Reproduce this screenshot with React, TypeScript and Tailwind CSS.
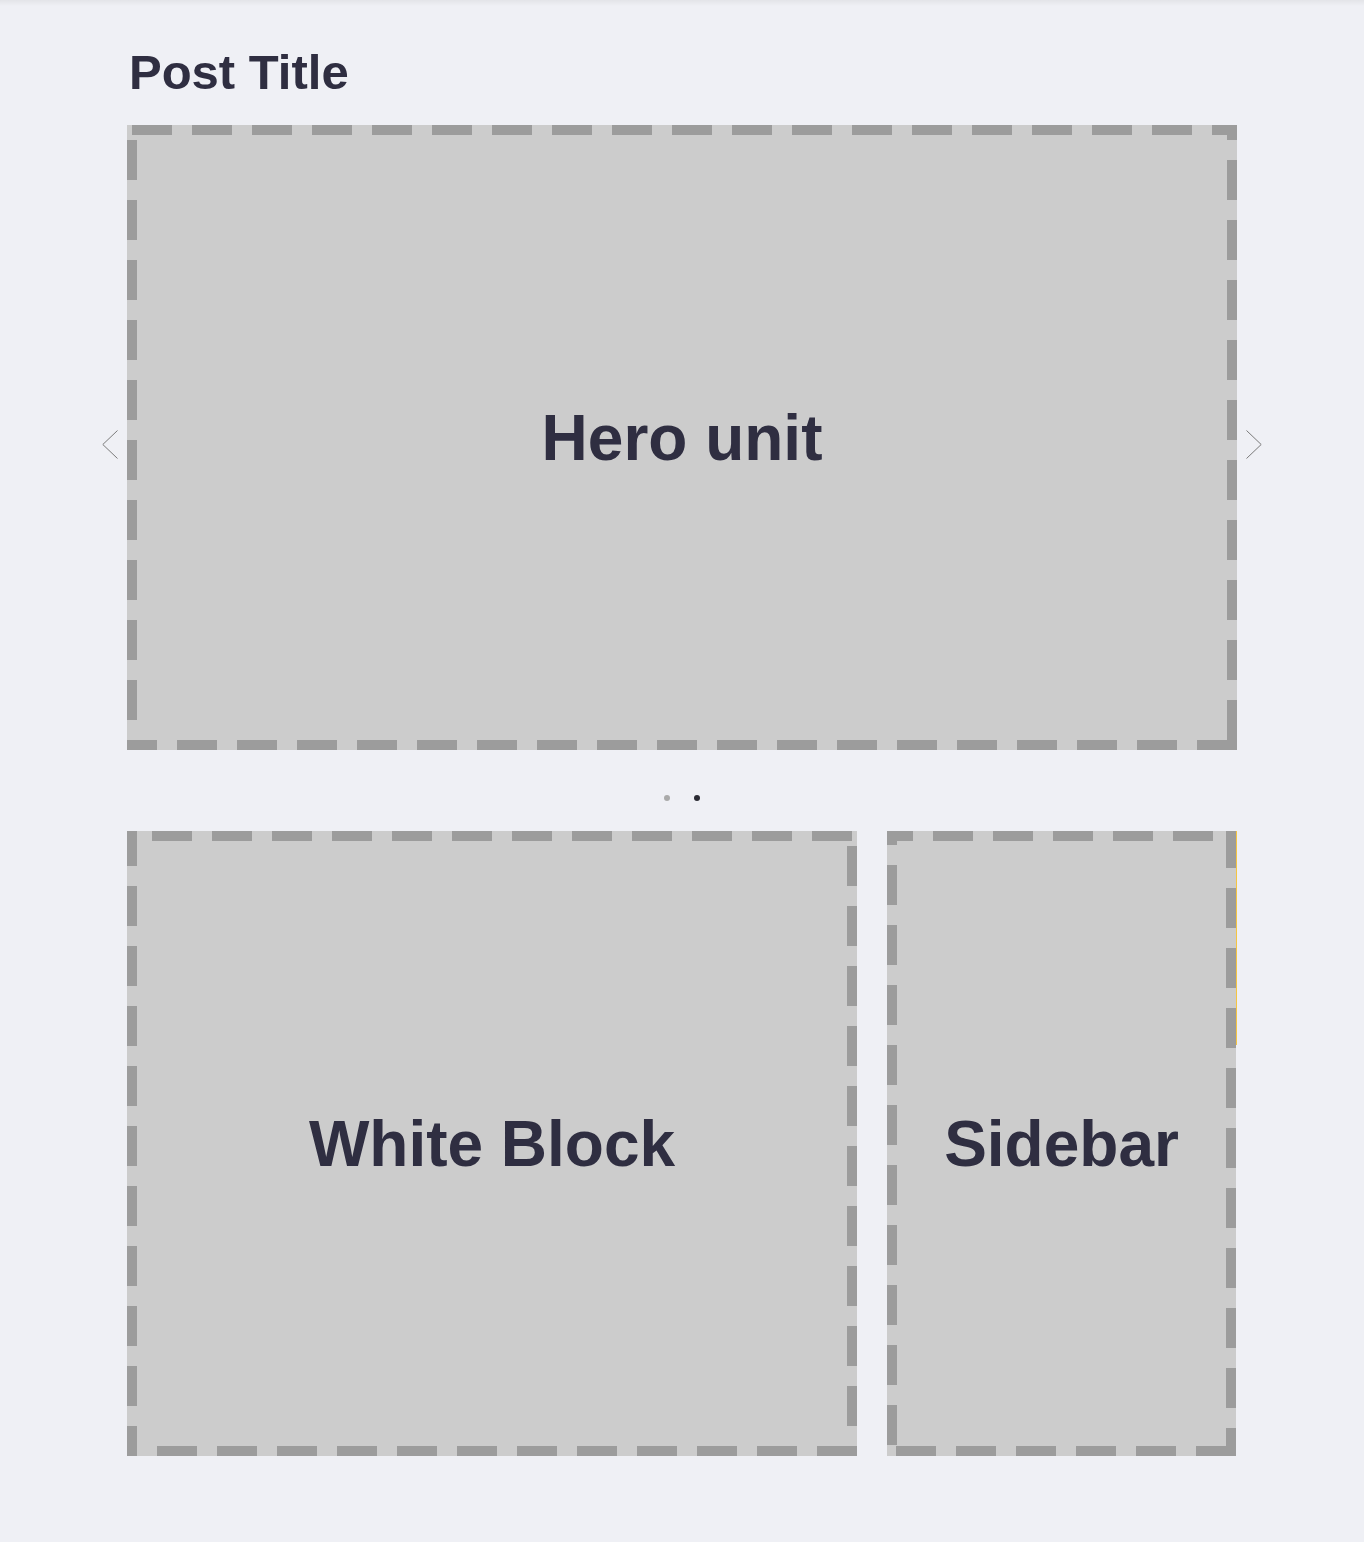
const font = { fontFamily: '"Liberation Sans", Arial, sans-serif' }

// dashed frames: 40px dash / 20px gap, painted per side so each box keeps its own phase
const heroFrame =
  "[background:repeating-linear-gradient(90deg,#9c9c9c_0_40px,transparent_40px_60px)_-55px_0/calc(100%_+_60px)_10px_no-repeat,repeating-linear-gradient(180deg,#9c9c9c_0_40px,transparent_40px_60px)_100%_-25px/10px_calc(100%_+_60px)_no-repeat,repeating-linear-gradient(90deg,#9c9c9c_0_40px,transparent_40px_60px)_-10px_100%/calc(100%_+_60px)_10px_no-repeat,repeating-linear-gradient(180deg,#9c9c9c_0_40px,transparent_40px_60px)_0_-45px/10px_calc(100%_+_60px)_no-repeat,#cccccc]"
const blockFrame =
  "[background:repeating-linear-gradient(90deg,#9c9c9c_0_40px,transparent_40px_60px)_-35px_0/calc(100%_+_60px)_10px_no-repeat,repeating-linear-gradient(180deg,#9c9c9c_0_40px,transparent_40px_60px)_100%_-45px/10px_calc(100%_+_60px)_no-repeat,repeating-linear-gradient(90deg,#9c9c9c_0_40px,transparent_40px_60px)_-30px_100%/calc(100%_+_60px)_10px_no-repeat,repeating-linear-gradient(180deg,#9c9c9c_0_40px,transparent_40px_60px)_0_-5px/10px_calc(100%_+_60px)_no-repeat,#cccccc]"
const sidebarFrame =
  "[background:repeating-linear-gradient(90deg,#9c9c9c_0_40px,transparent_40px_60px)_-14px_0/calc(100%_+_60px)_10px_no-repeat,repeating-linear-gradient(180deg,#9c9c9c_0_40px,transparent_40px_60px)_100%_-3px/10px_calc(100%_+_60px)_no-repeat,repeating-linear-gradient(90deg,#9c9c9c_0_40px,transparent_40px_60px)_-51px_100%/calc(100%_+_60px)_10px_no-repeat,repeating-linear-gradient(180deg,#9c9c9c_0_40px,transparent_40px_60px)_0_-26px/10px_calc(100%_+_60px)_no-repeat,#cccccc]"

function Placeholder({ label, frame }: { label: string; frame: string }) {
  return (
    <div className={`flex h-[625px] items-center justify-center p-[10px] ${frame}`}>
      <span className="text-[64px] font-bold leading-none text-[#2f2e41]">{label}</span>
    </div>
  )
}

function Chevron({ dir }: { dir: "left" | "right" }) {
  return (
    <svg width="16" height="30" viewBox="0 0 16 30" fill="none" stroke="#7a7a7a" strokeWidth="1">
      {dir === "left" ? (
        <polyline points="15.5,0.5 0.8,14.5 15.5,28.5" />
      ) : (
        <polyline points="0.5,0.5 15.2,14.5 0.5,28.5" />
      )}
    </svg>
  )
}

export default function App() {
  return (
    <div className="relative min-h-[1542px] bg-[#eff0f5]" style={font}>
      <div className="pointer-events-none absolute inset-x-0 top-0 h-[6px] bg-gradient-to-b from-[#e3e4e8] to-transparent" />

      <div className="mx-auto w-[1110px] pt-[48px]">
        <h1 className="mb-[28px] pl-[2px] text-[49px] font-bold leading-none text-[#2f2e41]">Post Title</h1>

        {/* carousel */}
        <div className="relative">
          <Placeholder label="Hero unit" frame={heroFrame} />
          <button className="absolute left-[-25px] top-[305px]">
            <Chevron dir="left" />
          </button>
          <button className="absolute right-[-25px] top-[305px]">
            <Chevron dir="right" />
          </button>
        </div>

        <div className="flex h-[81px] items-center justify-center gap-[24px] pt-[15px]">
          <span className="h-[6px] w-[6px] rounded-full bg-[#aaaaaa]" />
          <span className="h-[6px] w-[6px] rounded-full bg-[#2b2b33]" />
        </div>

        <div className="grid grid-cols-[730px_349px] gap-[30px]">
          <Placeholder label="White Block" frame={blockFrame} />
          <div className="relative">
            <Placeholder label="Sidebar" frame={sidebarFrame} />
            <div className="absolute right-[-1px] top-0 h-[214px] w-px bg-[#f5c542]" />
          </div>
        </div>
      </div>
    </div>
  )
}
